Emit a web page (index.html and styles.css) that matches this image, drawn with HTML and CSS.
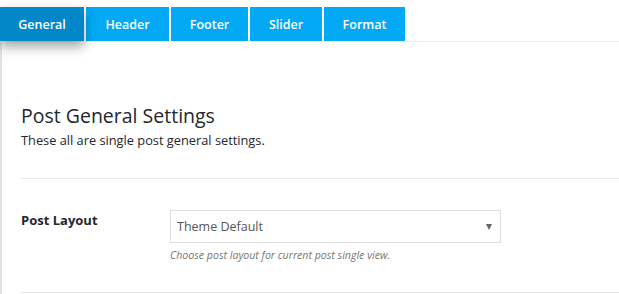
FILE: index.html
```html
<!DOCTYPE html>
<html lang="en">
<head>
    <meta charset="UTF-8">
    <title>Post Settings</title>
    <link rel="stylesheet" href="styles.css">
</head>
<body>
    <div class="tabs">
        <a class="tab active" href="#">General</a>
        <a class="tab" href="#">Header</a>
        <a class="tab" href="#">Footer</a>
        <a class="tab" href="#">Slider</a>
        <a class="tab" href="#">Format</a>
    </div>

    <div class="panel">
        <div class="section-head">
            <h2>Post General Settings</h2>
            <p>These all are single post general settings.</p>
        </div>

        <div class="field">
            <label class="field-label">Post Layout</label>
            <div class="field-control">
                <div class="select">
                    <span>Theme Default</span>
                    <span class="select-arrow"></span>
                </div>
                <p class="field-desc">Choose post layout for current post single view.</p>
            </div>
        </div>
    </div>
</body>
</html>
```

FILE: styles.css
```css
body {
    margin: 0;
    font-family: "Open Sans", "Noto Sans", sans-serif;
    color: #23282d;
    background: #fff;
}
.tabs {
    display: flex;
    gap: 2px;
    padding-top: 7px;
    border-bottom: 1px solid #eee;
}
.tab {
    display: block;
    height: 34px;
    line-height: 35px;
    background: #03a9f4;
    color: #fff;
    text-decoration: none;
    font-size: 12.5px;
    font-weight: 600;
    text-align: center;
}
.tab:nth-child(1) { width: 84px; }
.tab:nth-child(2) { width: 83px; }
.tab:nth-child(3) { width: 77px; }
.tab:nth-child(4) { width: 72px; }
.tab:nth-child(5) { width: 81px; }
.tab.active {
    background: #0288c8;
    box-shadow: 0 6px 12px rgba(0, 0, 0, 0.35);
    position: relative;
}
.panel {
    border-left: 2px solid #e2e2e2;
    padding: 0 0 0 19px;
    min-height: 260px;
}
.section-head {
    padding-top: 60px;
    padding-bottom: 29px;
    border-bottom: 1px solid #e8e8e8;
}
.section-head h2 {
    margin: 0;
    font-size: 19.5px;
    font-weight: 400;
    line-height: 27px;
}
.section-head p {
    margin: 2px 0 0;
    font-size: 12.8px;
    line-height: 18px;
}
.field {
    display: flex;
    padding: 31px 0 30px;
    border-bottom: 1px solid #e8e8e8;
}
.field-label {
    width: 149px;
    font-size: 13px;
    font-weight: 700;
    line-height: 18px;
    padding-top: 1px;
}
.field-control {
    width: 331px;
}
.select {
    display: flex;
    align-items: center;
    justify-content: space-between;
    height: 31px;
    padding: 0 8px 0 6px;
    border: 1px solid #ddd;
    font-size: 12.5px;
    color: #555;
}
.select-arrow {
    width: 0;
    height: 0;
    border-left: 3px solid transparent;
    border-right: 3px solid transparent;
    border-top: 6px solid #666;
}
.field-desc {
    margin: 5px 0 0;
    font-size: 10.6px;
    font-style: italic;
    color: #777;
}
```
